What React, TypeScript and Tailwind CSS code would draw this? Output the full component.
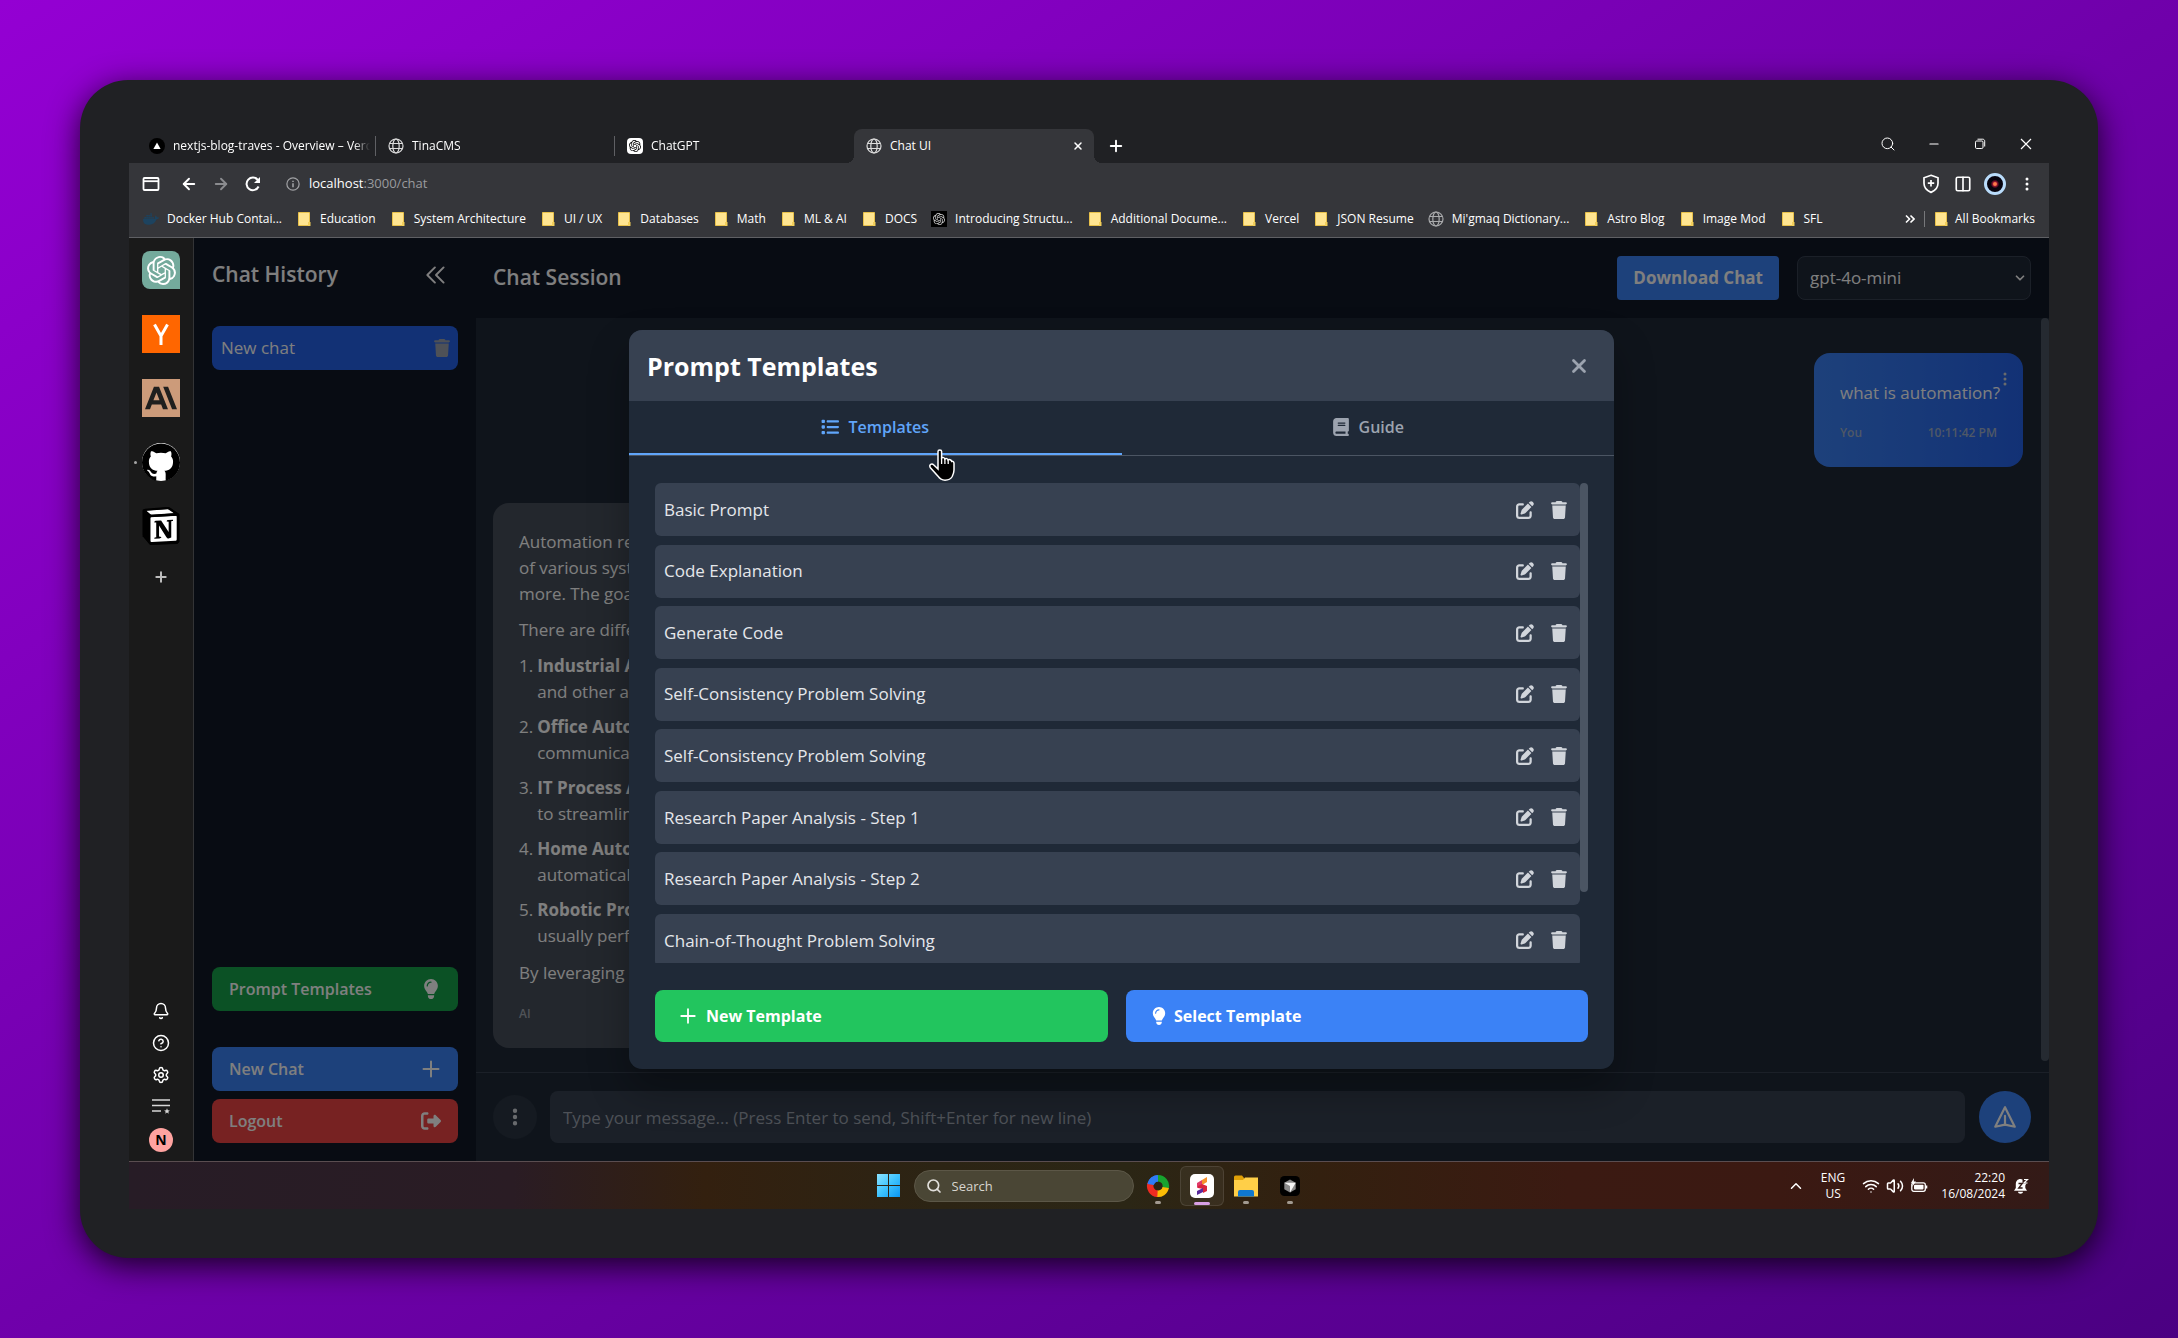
import React from "react";
import { SiOpenai, SiAnthropic, SiGithub, SiNotion, SiDocker } from "react-icons/si";
import {
  FaTrash,
  FaPenToSquare,
  FaLightbulb,
  FaRightFromBracket,
  FaList,
  FaBook,
  FaEllipsisVertical,
} from "react-icons/fa6";
import { BsThreeDotsVertical } from "react-icons/bs";
import {
  ArrowLeft,
  ArrowRight,
  Bell,
  ChevronDown,
  ChevronUp,
  CircleHelp,
  Columns2,
  Minus,
  Plus,
  Search,
  Settings,
  Volume2,
  Wifi,
  X,
} from "lucide-react";

function Globe({ className }: { className?: string }) {
  return (
    <svg viewBox="0 0 16 16" className={className} fill="none" stroke="currentColor" strokeWidth="1.2" aria-hidden="true">
      <circle cx="8" cy="8" r="7" />
      <ellipse cx="8" cy="8" rx="3.2" ry="7" />
      <path d="M1.8 5.5h12.4M1.8 10.5h12.4" />
    </svg>
  );
}

function Folder() {
  return (
    <svg viewBox="0 0 16 16" className="size-4 shrink-0" aria-hidden="true">
      <path d="M2.5 1.500h11v13h-11z" fill="#ffe591" stroke="#e8c14a" />
      <path d="M12 11v4h2.500v-4z" fill="#f2cf5b" />
    </svg>
  );
}

function AddIcon({ className }: { className?: string }) {
  return (
    <svg viewBox="0 0 24 24" className={className} fill="none" stroke="currentColor" strokeWidth="2.4" strokeLinecap="round" aria-hidden="true">
      <path d="M12 3v18M3 12h18" />
    </svg>
  );
}

/* ---------- Browser chrome ---------- */

const tabs = [
  {
    title: "nextjs-blog-traves - Overview – Vercel",
    icon: (
      <svg viewBox="0 0 16 16" className="size-4 shrink-0" aria-hidden="true">
        <circle cx="8" cy="8" r="8" fill="#000" />
        <path d="M8 4.5l3.6 6.4H4.4z" fill="#fff" />
      </svg>
    ),
  },
  { title: "TinaCMS", icon: <Globe className="size-4 shrink-0 text-[#dcdcdc]" /> },
  {
    title: "ChatGPT",
    icon: (
      <span className="flex size-4 shrink-0 items-center justify-center rounded-sm bg-white text-black">
        <SiOpenai className="size-3" />
      </span>
    ),
  },
];

function TabStrip() {
  return (
    <div className="flex h-[34px] items-stretch pl-2 text-white">
      {tabs.map((t, i) => (
        <button key={t.title} type="button" className="flex w-[239px] items-center pl-3 text-left">
          {t.icon}
          <span className="ml-2 w-[197px] overflow-hidden whitespace-nowrap [mask-image:linear-gradient(to_right,black_92%,transparent)]">
            {t.title}
          </span>
          <span className={i < 2 ? "ml-auto h-5 w-px bg-[#5f6064]" : "hidden"} />
        </button>
      ))}
      <div className="relative flex w-[240px] items-center rounded-t-lg bg-[#35363a] pr-[10px] pl-3 before:absolute before:bottom-0 before:-left-2 before:size-2 before:bg-[radial-gradient(circle_at_0_0,transparent_8px,#35363a_8px)] after:absolute after:-right-2 after:bottom-0 after:size-2 after:bg-[radial-gradient(circle_at_100%_0,transparent_8px,#35363a_8px)]">
        <Globe className="size-4 shrink-0 text-[#dcdcdc]" />
        <span className="ml-2">Chat UI</span>
        <button type="button" aria-label="Close tab" className="ml-auto">
          <X className="size-3" strokeWidth={3} />
        </button>
      </div>
      <button type="button" aria-label="New tab" className="ml-[13px]">
        <Plus className="size-[18px]" strokeWidth={2.5} />
      </button>
      <div className="mb-1 ml-auto flex items-center">
        <button type="button" aria-label="Search tabs" className="flex w-[46px] justify-center">
          <Search className="size-4" strokeWidth={1.5} />
        </button>
        <button type="button" aria-label="Minimise" className="flex w-[46px] justify-center">
          <Minus className="size-[14px]" strokeWidth={2} />
        </button>
        <button type="button" aria-label="Restore" className="flex w-[46px] justify-center">
          <svg viewBox="0 0 12 12" className="size-3" fill="none" stroke="currentColor" aria-hidden="true">
            <rect x="1.5" y="3" width="7.5" height="7.5" rx="1.2" />
            <path d="M3.5 1.2h5.2c1.2 0 2 .8 2 2v5.3" />
          </svg>
        </button>
        <button type="button" aria-label="Close window" className="flex w-[46px] justify-center">
          <svg viewBox="0 0 12 12" className="size-3" fill="none" stroke="currentColor" strokeWidth="1.2" aria-hidden="true">
            <path d="M1 1l10 10M11 1L1 11" />
          </svg>
        </button>
      </div>
    </div>
  );
}

function AddressBar() {
  return (
    <div className="flex h-[42px] items-center pr-[14px] pl-[13px] text-white">
      <button type="button" aria-label="Panels">
        <svg viewBox="0 0 18 16" className="h-4 w-[18px]" fill="none" stroke="currentColor" strokeWidth="1.8" aria-hidden="true">
          <rect x="1.500" y="2" width="15" height="12" rx="1" />
          <path d="M1.5 5.2h15" />
        </svg>
      </button>
      <button type="button" aria-label="Back" className="ml-5">
        <ArrowLeft className="size-[18px]" strokeWidth={2.5} />
      </button>
      <button type="button" aria-label="Forward" className="ml-[14px] text-[#8b8c8f]">
        <ArrowRight className="size-[18px]" strokeWidth={2.5} />
      </button>
      <button type="button" aria-label="Reload" className="ml-[14px]">
        <svg viewBox="0 0 18 18" className="size-[18px]" fill="none" stroke="currentColor" strokeWidth="2" aria-hidden="true">
          <path d="M14.6 11.5a6.3 6.3 0 1 1-.8-6.6" />
          <path d="M16 2v6h-6z" fill="currentColor" stroke="none" />
        </svg>
      </button>
      <svg viewBox="0 0 16 16" className="ml-6 size-[14px]" fill="none" stroke="#a0a1a4" strokeWidth="1.4" aria-hidden="true">
        <circle cx="8" cy="8" r="7" />
        <path d="M8 7v4.8M8 4.2v1.6" strokeWidth="1.8" />
      </svg>
      <p className="ml-[9px] text-[13px] text-[#9a9b9e]">
        <span className="text-white">localhost</span>:3000/chat
      </p>
      <div className="ml-auto flex items-center">
        <button type="button" aria-label="Privacy shield">
          <svg viewBox="0 0 18 20" className="h-5 w-[18px]" fill="none" stroke="currentColor" strokeWidth="1.7" aria-hidden="true">
            <path d="M9 1.3l7 2.5v5.4c0 4.4-2.9 7.4-7 9.2-4.100-1.800-7-4.800-7-9.200V3.800z" />
            <path d="M9 6v6.500M5.800 9.200h6.400" />
          </svg>
        </button>
        <button type="button" aria-label="Split screen" className="ml-[14px]">
          <Columns2 className="size-[18px]" strokeWidth={2.200} />
        </button>
        <button type="button" aria-label="Profile" className="ml-3 size-[22px] rounded-full border-[3px] border-[#b9dcfb] bg-[radial-gradient(circle,#ff7a4a_0_12%,#8a1230_22%,#07040f_38%)]" />
        <button type="button" aria-label="Menu" className="ml-[13px]">
          <BsThreeDotsVertical className="size-4" />
        </button>
      </div>
    </div>
  );
}

const openAiMark = (
  <span className="flex size-4 shrink-0 items-center justify-center bg-black text-[#d0d0d0]">
    <SiOpenai className="size-3" />
  </span>
);

const bookmarks = [
  { label: "Docker Hub Contai...", icon: <SiDocker className="size-4 shrink-0 text-[#1d435f]" /> },
  { label: "Education" },
  { label: "System Architecture" },
  { label: "UI / UX" },
  { label: "Databases" },
  { label: "Math" },
  { label: "ML & AI" },
  { label: "DOCS" },
  { label: "Introducing Structu...", icon: openAiMark },
  { label: "Additional Docume..." },
  { label: "Vercel" },
  { label: "JSON Resume" },
  { label: "Mi'gmaq Dictionary...", icon: <Globe className="size-4 shrink-0 text-[#a9aaac]" /> },
  { label: "Astro Blog" },
  { label: "Image Mod" },
  { label: "SFL" },
];

function BookmarkBar() {
  return (
    <nav aria-label="Bookmarks" className="flex h-[33px] items-center border-b border-[#5f6064] pr-[14px] pb-1 pl-[14px] text-white">
      <ul className="flex gap-[14px]">
        {bookmarks.map((b) => (
          <li key={b.label}>
            <a href="#" className="flex items-center gap-2 whitespace-nowrap">
              {b.icon ?? <Folder />}
              {b.label}
            </a>
          </li>
        ))}
      </ul>
      <button type="button" aria-label="More bookmarks" className="ml-auto">
        <svg viewBox="0 0 10 10" className="size-[10px]" fill="none" stroke="currentColor" strokeWidth="1.6" aria-hidden="true">
          <path d="M1 1.500l3.500 3.500L1 8.500M5.500 1.500L9 5 5.500 8.500" />
        </svg>
      </button>
      <span className="mr-2 ml-[9px] h-4 w-px bg-[#77787b]" />
      <a href="#" className="flex items-center gap-[6px] whitespace-nowrap">
        <Folder />
        All Bookmarks
      </a>
    </nav>
  );
}

/* ---------- Left rail ---------- */

function AppRail() {
  return (
    <aside className="flex w-[65px] shrink-0 flex-col items-center border-r border-[#333436] bg-[#1a1a1a] pt-[13px] pb-[9px] text-white">
      <div className="flex flex-col gap-[26px]">
        <a href="#" aria-label="ChatGPT" className="flex size-[38px] items-center justify-center rounded-lg rounded-br-none bg-[#74aa9c]">
          <SiOpenai className="size-[29px]" />
        </a>
        <a href="#" aria-label="Hacker News" className="block size-[38px] bg-[#ff6600]">
          <svg viewBox="0 0 38 38" fill="none" stroke="#fff" strokeWidth="3" aria-hidden="true">
            <path d="M12.500 9.500L19 21l6.500-11.500M19 20.500V30" />
          </svg>
        </a>
        <a href="#" aria-label="Anthropic" className="flex size-[38px] items-center justify-center bg-[#cc9b7a] text-[#1f1f1e]">
          <SiAnthropic className="size-8" />
        </a>
        <a href="#" aria-label="GitHub" className="relative flex size-[38px] items-center justify-center rounded-full bg-white text-black">
          <SiGithub className="size-[38px] shrink-0" />
          <span className="absolute top-[18px] -left-2 size-[3px] rounded-full bg-[#a5a5a5]" />
        </a>
        <a href="#" aria-label="Notion" className="block size-[38px]">
          <svg viewBox="0 0 24 24" aria-hidden="true">
            <path d="M.4 1.700L16.800.2l6.800 4.200v17.200l-1.200 1.700-17.300.6L.4 18.400z" fill="#000" />
            <path d="M2.600 2.200L16.300 1.300l3.900 2.600-14.300 1.100zM5.200 6.500l17-1v16.700l-17 .9z" fill="#fff" />
            <SiNotion size={24} color="#000" />
          </svg>
        </a>
      </div>
      <button type="button" aria-label="Add app" className="mt-[24px] text-[#bdbdbd]">
        <Plus className="size-4" strokeWidth={3} />
      </button>
      <div className="mt-auto flex flex-col items-center gap-[14px]">
        <button type="button" aria-label="Notifications">
          <Bell className="size-[18px]" />
        </button>
        <button type="button" aria-label="Help">
          <CircleHelp className="size-[18px]" />
        </button>
        <button type="button" aria-label="Settings">
          <Settings className="size-[18px]" />
        </button>
        <button type="button" aria-label="Reading list">
          <svg viewBox="0 0 18 16" className="h-4 w-[18px]" fill="none" stroke="#d6d6d6" strokeWidth="1.500" aria-hidden="true">
            <path d="M0 2h18M0 7.500h18M0 13h9" />
            <path d="M15 10.300l.8 1.900 2.100.2-1.600 1.300.5 2-1.800-1.100-1.800 1.100.5-2-1.600-1.300 2.100-.2z" fill="#d6d6d6" stroke="none" />
          </svg>
        </button>
        <button type="button" className="size-6 rounded-full bg-[#ffa3a0] text-center text-[14px] leading-6 font-bold text-black">
          N
        </button>
      </div>
    </aside>
  );
}

/* ---------- Chat application ---------- */

function HistoryPanel() {
  return (
    <aside className="flex w-[282px] shrink-0 flex-col bg-[#111827] px-[18px] pt-[19px] pb-[18px] text-white">
      <div className="flex h-[35px] items-center justify-between">
        <h2 className="text-[21px] font-semibold">Chat History</h2>
        <button type="button" aria-label="Collapse history" className="mr-[9px]">
          <svg viewBox="0 0 24 24" className="size-[26px]" fill="none" stroke="currentColor" strokeWidth="1.800" strokeLinecap="round" strokeLinejoin="round" aria-hidden="true">
            <path d="M11 19l-7-7 7-7m8 14l-7-7 7-7" />
          </svg>
        </button>
      </div>
      <ul className="mt-[34px]">
        <li className="flex h-11 items-center justify-between rounded-lg bg-[#2563eb] pr-[7px] pl-[9px]">
          <a href="#">New chat</a>
          <button type="button" aria-label="Delete chat" className="text-[#9ca3af]">
            <FaTrash className="size-[18px]" />
          </button>
        </li>
      </ul>
      <div className="mt-auto flex flex-col text-[16px] font-semibold">
        <button type="button" className="flex h-11 items-center justify-between rounded-lg bg-[#16a34a] px-[17px]">
          Prompt Templates
          <FaLightbulb className="size-5" />
        </button>
        <button type="button" className="mt-9 flex h-11 items-center justify-between rounded-lg bg-[#3b82f6] px-[17px]">
          New Chat
          <AddIcon className="size-5" />
        </button>
        <button type="button" className="mt-2 flex h-11 items-center justify-between rounded-lg bg-[#ef4444] px-[17px]">
          Logout
          <FaRightFromBracket className="size-5" />
        </button>
      </div>
    </aside>
  );
}

const steps = [
  { name: "Industrial Auto", rest: "and other apps" },
  { name: "Office Auto", rest: "communication" },
  { name: "IT Process Auto", rest: "to streamline" },
  { name: "Home Auto", rest: "automatically" },
  { name: "Robotic Process", rest: "usually perform" },
];

function Messages() {
  return (
    <div className="flex min-h-0 flex-1">
      <div className="flex flex-1 flex-col gap-9 pt-[35px] pr-[18px] pl-[17px]">
        <article className="relative ml-auto w-[209px] rounded-2xl bg-[linear-gradient(to_right,#3b82f6,#2563eb)] p-[26px]">
          <p className="whitespace-nowrap leading-7">what is automation?</p>
          <footer className="mt-[18px] flex justify-between text-[12px] leading-4 font-semibold text-[#9fb0cc]">
            <span>You</span>
            <time>10:11:42 PM</time>
          </footer>
          <button type="button" aria-label="Message options" className="absolute top-[18px] right-[10px]">
            <BsThreeDotsVertical className="size-4 text-[#d1d5db]" />
          </button>
        </article>
        <article className="mr-auto w-[1100px] rounded-2xl bg-[linear-gradient(to_right,#464e5a,#4b5563)] p-[26px] leading-[26px] whitespace-nowrap">
          <p>
            Automation refers
            <br />
            of various systems
            <br />
            more. The goal is
          </p>
          <p className="mt-[10px]">There are different</p>
          <ol className="mt-[10px] flex flex-col gap-[9px]">
            {steps.map((s, i) => (
              <li key={s.name} className="flex gap-1">
                <span>{i + 1}.</span>
                <p>
                  <strong>{s.name}</strong>
                  <br />
                  {s.rest}
                </p>
              </li>
            ))}
          </ol>
          <p className="mt-[11px]">By leveraging</p>
          <footer className="mt-5 text-[12px] leading-4 font-semibold text-[#a0a6b0]">AI</footer>
        </article>
      </div>
      <div className="h-[743px] w-2 rounded-full bg-[#4b5563]" />
    </div>
  );
}

function ChatMain() {
  return (
    <main className="flex min-w-0 flex-1 flex-col bg-[#1f2937] text-white">
      <header className="flex h-20 shrink-0 items-center bg-[#111827] pr-[18px] pl-[17px]">
        <h1 className="text-[21px] font-semibold">Chat Session</h1>
        <button type="button" className="ml-auto h-11 rounded bg-[#3b82f6] px-4 font-bold">
          Download Chat
        </button>
        <div className="relative ml-[18px]">
          <select aria-label="Model" defaultValue="gpt-4o-mini" className="h-11 w-[234px] appearance-none rounded-lg border border-[#374151] bg-[#1f2937] px-[12px]">
            <option>gpt-4o-mini</option>
            <option>gpt-4o</option>
          </select>
          <ChevronDown className="pointer-events-none absolute top-[15px] right-[4px] size-[14px]" strokeWidth={3} />
        </div>
      </header>
      <Messages />
      <form className="flex h-[89px] shrink-0 items-center border-t border-[#374151] pr-[18px] pl-[17px]">
        <button type="button" aria-label="Options" className="flex size-11 items-center justify-center rounded-full bg-[#2a3442] text-[#d1d5db]">
          <FaEllipsisVertical className="size-5" />
        </button>
        <input
          type="text"
          aria-label="Message"
          placeholder="Type your message... (Press Enter to send, Shift+Enter for new line)"
          className="ml-[13px] h-[52px] min-w-0 flex-1 rounded-lg bg-[#374151] px-[13px] placeholder:text-[#9ca3af]"
        />
        <button type="button" aria-label="Send" className="ml-[14px] flex size-[52px] items-center justify-center rounded-full bg-[#3b82f6]">
          <svg viewBox="0 0 24 24" className="size-[26px]" fill="none" stroke="currentColor" strokeWidth="2" strokeLinecap="round" strokeLinejoin="round" aria-hidden="true">
            <path d="M12 19l9 2-9-18-9 18 9-2zm0 0v-8" />
          </svg>
        </button>
      </form>
    </main>
  );
}

/* ---------- Prompt templates dialog ---------- */

const templates = [
  "Basic Prompt",
  "Code Explanation",
  "Generate Code",
  "Self-Consistency Problem Solving",
  "Self-Consistency Problem Solving",
  "Research Paper Analysis - Step 1",
  "Research Paper Analysis - Step 2",
  "Chain-of-Thought Problem Solving",
];

function TemplatesDialog() {
  return (
    <div className="absolute inset-0 flex items-center justify-center bg-black/50">
      <section role="dialog" aria-label="Prompt Templates" className="w-[985px] overflow-hidden rounded-[13px] bg-[#1f2937] shadow-[0_20px_40px_rgba(0,0,0,0.3)]">
        <header className="flex h-[71px] items-center justify-between bg-[#374151] pr-6 pl-[18px]">
          <h2 className="text-[25px] leading-9 font-bold text-white">Prompt Templates</h2>
          <button type="button" aria-label="Close" className="text-[#9ca3af]">
            <X className="size-[22px]" strokeWidth={3} />
          </button>
        </header>
        <div role="tablist" className="flex border-b border-[#4b5563] text-[16px] font-semibold">
          <button type="button" role="tab" aria-selected="true" className="flex h-[54px] flex-1 items-center justify-center gap-[9px] border-b-2 border-[#60a5fa] text-[#60a5fa]">
            <FaList className="size-[18px]" />
            Templates
          </button>
          <button type="button" role="tab" aria-selected="false" className="flex h-[54px] flex-1 items-center justify-center gap-[9px] border-b-2 border-transparent text-[#9ca3af]">
            <FaBook className="size-[18px]" />
            Guide
          </button>
        </div>
        <div className="px-[26px] py-[27px]">
          <div className="flex h-[480px] overflow-hidden">
            <ul className="flex h-[484px] min-w-0 flex-1 flex-col justify-between">
              {templates.map((t, i) => (
                <li key={i} className="flex h-[53px] shrink-0 items-center rounded-md bg-[#374151] pr-[12px] pl-[9px] text-[#e5e7eb]">
                  {t}
                  <button type="button" aria-label={"Edit " + t} className="ml-auto text-[#d1d5db]">
                    <FaPenToSquare className="size-[18px]" />
                  </button>
                  <button type="button" aria-label={"Delete " + t} className="ml-4 text-[#d1d5db]">
                    <FaTrash className="size-[18px]" />
                  </button>
                </li>
              ))}
            </ul>
            <div className="h-[409px] w-2 rounded-full bg-[#4b5563]" />
          </div>
          <div className="mt-[27px] grid grid-cols-[453fr_462fr] gap-[18px] text-[16px] font-bold text-white">
            <button type="button" className="flex h-[52px] items-center gap-[9px] rounded-lg bg-[#22c55e] px-[24px]">
              <AddIcon className="size-[18px]" />
              New Template
            </button>
            <button type="button" className="flex h-[52px] items-center gap-[6px] rounded-lg bg-[#3b82f6] px-[24px]">
              <FaLightbulb className="size-[18px]" />
              Select Template
            </button>
          </div>
        </div>
      </section>
    </div>
  );
}

/* ---------- Taskbar ---------- */

function TaskDot() {
  return <span className="absolute bottom-[5px] h-[3px] w-[6px] rounded-full bg-[#a29a90]" />;
}

function Taskbar() {
  return (
    <footer className="grid h-12 shrink-0 grid-cols-[1fr_auto_1fr] items-center border-t border-[#5a4d50] bg-[linear-gradient(to_right,#271c26_0%,#2a1c24_20%,#33200f_30%,#2c2414_42%,#2b2615_52%,#33200f_62%,#3b1a12_75%,#3b1912_86%,#331a17_100%)] text-[12px] leading-4 text-white">
      <div />
      <div className="flex h-full items-center pl-[10px]">
        <button type="button" aria-label="Start">
          <svg viewBox="0 0 23 23" className="size-[23px]" aria-hidden="true">
            <defs>
              <linearGradient id="start" x1="0" y1="0" x2="1" y2="1">
                <stop offset="0" stopColor="#8be3ff" />
                <stop offset=".5" stopColor="#3ec3ff" />
                <stop offset="1" stopColor="#0a96f5" />
              </linearGradient>
            </defs>
            <path d="M0 0h11v11H0zM12 0h11v11H12zM0 12h11v11H0zM12 12h11v11H12z" fill="url(#start)" />
          </svg>
        </button>
        <label className="ml-[14px] flex h-8 w-[220px] items-center rounded-full border border-[#5c5747] bg-[#4a4635] pl-[11px]">
          <Search className="size-4 text-[#e2e0dc]" strokeWidth={2.500} />
          <input type="text" placeholder="Search" aria-label="Search" className="ml-[10px] w-32 bg-transparent text-[13px] placeholder:text-[#d8d5cf]" />
        </label>
        <button type="button" aria-label="Browser" className="relative ml-[2px] flex h-full w-11 items-center justify-center">
          <svg viewBox="0 0 24 24" className="size-6" fill="none" strokeWidth="6.500" aria-hidden="true">
            <path d="M4.800 10A7.800 7.800 0 0 1 12 4.200" stroke="#2f7bf6" />
            <path d="M11.500 4.200A7.800 7.800 0 0 1 19.600 14" stroke="#17a32f" />
            <path d="M19.700 13.500A7.800 7.800 0 0 1 10.500 19.700" stroke="#fbbc05" />
            <path d="M11.500 19.800A7.800 7.800 0 0 1 4.600 9.500" stroke="#ee2b22" />
            <path d="M4.600 10.500A7.800 7.800 0 0 1 12 4.200" stroke="#2f7bf6" />
          </svg>
          <TaskDot />
        </button>
        <button type="button" aria-label="Snagit" className="relative flex h-10 w-11 items-center justify-center rounded-md border border-white/10 bg-white/5">
          <svg viewBox="0 0 24 24" className="size-6" aria-hidden="true">
            <rect width="24" height="24" rx="5" fill="#fff" />
            <path d="M7 9l5-3v6l-5 2z" fill="#e03a6a" />
            <path d="M12 6l5-3v5l-5 3z" fill="#f6902a" />
            <path d="M8 12l4-2 5 2v5l-4 2v-4l-5-1z" fill="#d8243c" />
            <path d="M7 17l6-3v4l-6 3z" fill="#5b2a9c" />
          </svg>
          <span className="absolute bottom-0 h-[3px] w-4 rounded-full bg-[#d9a0e4]" />
        </button>
        <button type="button" aria-label="File Explorer" className="relative flex h-full w-11 items-center justify-center">
          <svg viewBox="0 0 24 24" className="size-6" aria-hidden="true">
            <path d="M0 3A1.500 1.500 0 0 1 1.500 1.500H8L10 4v3H0z" fill="#e0a008" />
            <path d="M0 6h9l2-2.500h13V22.500H0z" fill="#ffcf48" />
            <path d="M4 22.500v-4.500A2 2 0 0 1 6 16h12a2 2 0 0 1 2 2v4.500z" fill="#0f78cf" />
          </svg>
          <TaskDot />
        </button>
        <button type="button" aria-label="Cursor" className="relative flex h-full w-11 items-center justify-center">
          <svg viewBox="0 0 20 20" className="size-5" aria-hidden="true">
            <rect width="20" height="20" rx="4.500" fill="#000" />
            <path d="M10 3.500l5.700 3.200v6.600L10 16.500l-5.700-3.200V6.700z" fill="#8a8a8a" />
            <path d="M4.300 6.700h11.400L10 16.500V10z" fill="#f4f4f4" />
          </svg>
          <TaskDot />
        </button>
      </div>
      <div className="flex items-center justify-end pr-[20px]">
        <ChevronUp className="size-[18px]" />
        <p className="ml-4 text-center">
          ENG
          <br />
          US
        </p>
        <Wifi className="ml-[17px] size-[18px]" />
        <Volume2 className="ml-[6px] size-[18px]" />
        <svg viewBox="0 0 18 16" className="ml-[6px] h-4 w-[18px]" aria-hidden="true">
          <rect x="1.800" y="4.800" width="13.500" height="8.500" rx="2" fill="none" stroke="#fff" strokeWidth="1.300" />
          <rect x="4" y="6.800" width="9.500" height="4.600" rx=".8" fill="#fff" />
          <path d="M16.500 7.500v3" stroke="#fff" strokeWidth="1.600" />
          <path d="M4 0L1 5h2l-1 4 4-5.500H3.800z" fill="#fff" />
        </svg>
        <p className="ml-[13px] text-right">
          22:20
          <br />
          16/08/2024
        </p>
        <svg viewBox="0 0 16 16" className="ml-2 size-4" aria-hidden="true">
          <path d="M7.500 1C4.500 1 2.800 3.200 2.800 6v4L1 12.800h13L12.300 10V7.500L14 4 10.500 1.800zM5 13.800h5c0 1.200-1.100 2-2.500 2s-2.500-.8-2.500-2z" fill="#fff" />
          <path d="M9.500.500h6.500v5h-6.500z" fill="#331a17" />
          <path d="M11 1.500h3.500L11 5h3.500" fill="none" stroke="#fff" strokeWidth="1.200" />
          <path d="M5.500 5.500h3.800L5.700 10h3.900" fill="none" stroke="#331a17" strokeWidth="1.300" />
        </svg>
      </div>
    </footer>
  );
}

function HandCursor() {
  return (
    <svg viewBox="0 0 26 32" className="pointer-events-none absolute top-[211px] left-[735px] h-8 w-[26px]" aria-hidden="true">
      <path
        d="M9 2.500c0-2 3.600-2 3.600 0V9c1-.8 3-.5 3.300.9 1-.7 2.900-.4 3.200 1 1-.7 3.200-.2 3.600 1.500 1-.4 2.300.3 2.300 1.900V21c0 2.600-.7 4.200-1.800 6.500-1.300 2.400-3.600 3.700-7.200 3.700-3.200 0-5.200-1.300-7-4L1.200 18.500C-.2 15.800 2.600 14 4.800 16L9 20z"
        fill="#000"
        stroke="#fff"
        strokeWidth="1.500"
      />
      <path d="M12.600 9v6M15.900 10v5M19.200 11v4" stroke="#fff" strokeWidth="1.300" />
    </svg>
  );
}

export default function App() {
  return (
    <div className="flex min-h-screen bg-[linear-gradient(to_bottom_right,#9400d3,#4b0082)] p-20 font-['Open_Sans','Noto_Sans',sans-serif]">
      <div className="flex min-w-0 flex-1 rounded-[48px] bg-[#202124] p-[49px] shadow-[0_8px_32px_rgba(0,0,0,0.8)]">
        <div className="flex min-w-0 flex-1 flex-col text-[12px]">
          <TabStrip />
          <div className="bg-[#35363a]">
            <AddressBar />
            <BookmarkBar />
          </div>
          <div className="flex flex-1 text-[17px]">
            <AppRail />
            <div className="relative flex min-w-0 flex-1 overflow-hidden">
              <HistoryPanel />
              <ChatMain />
              <TemplatesDialog />
              <HandCursor />
            </div>
          </div>
          <Taskbar />
        </div>
      </div>
    </div>
  );
}
